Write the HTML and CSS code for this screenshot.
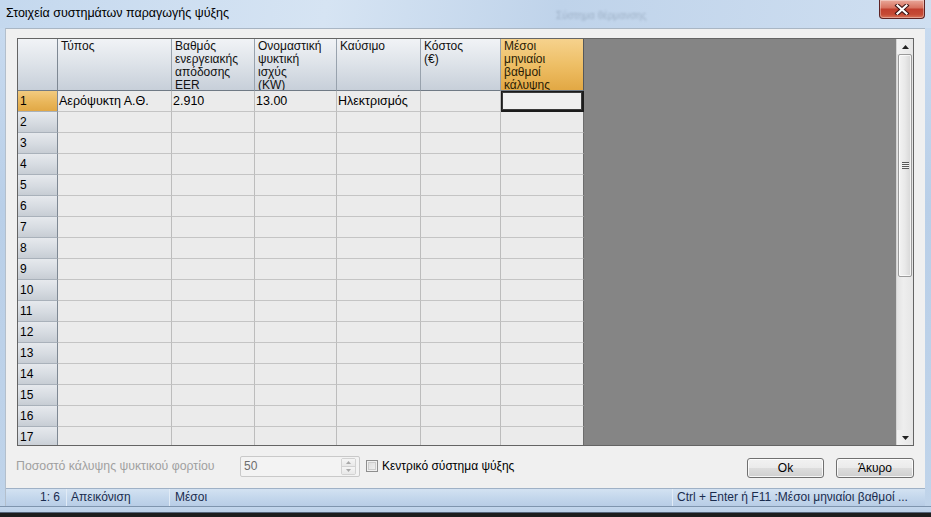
FILE: index.html
```html
<!DOCTYPE html>
<html lang="el">
<head>
<meta charset="utf-8">
<title>Στοιχεία συστημάτων παραγωγής ψύξης</title>
<link rel="stylesheet" href="styles.css">
</head>
<body>
<div class="window">
  <div class="titlebar">
    <span class="title">Στοιχεία συστημάτων παραγωγής ψύξης</span>
    <span class="ghost">Σύστημα θέρμανσης</span>
    <button class="close" aria-label="Κλείσιμο">
      <svg width="16" height="11" viewBox="0 0 16 11"><path d="M3.5 1.5 L12.5 9.5 M12.5 1.5 L3.5 9.5" stroke="#3b1313" stroke-width="4.2" stroke-linecap="square" fill="none"/><path d="M3.5 1.5 L12.5 9.5 M12.5 1.5 L3.5 9.5" stroke="#ffffff" stroke-width="2.2" stroke-linecap="square" fill="none"/></svg>
    </button>
  </div>
  <div class="client">
    <div class="gridbox">
      <div class="sheet">
        <div class="hc corner"></div>
        <div class="hc">Τύπος</div>
        <div class="hc">Βαθμός<br>ενεργειακής<br>απόδοσης<br>EER</div>
        <div class="hc">Ονομαστική<br>ψυκτική<br>ισχύς<br>(KW)</div>
        <div class="hc">Καύσιμο</div>
        <div class="hc">Κόστος<br>(€)</div>
        <div class="hc active">Μέσοι<br>μηνιαίοι<br>βαθμοί<br>κάλυψης</div>

        <div class="rh active">1</div><div class="c">Αερόψυκτη Α.Θ.</div><div class="c">2.910</div><div class="c">13.00</div><div class="c">Ηλεκτρισμός</div><div class="c"></div><div class="c sel"></div>
        <div class="rh">2</div><div class="c"></div><div class="c"></div><div class="c"></div><div class="c"></div><div class="c"></div><div class="c"></div>
        <div class="rh">3</div><div class="c"></div><div class="c"></div><div class="c"></div><div class="c"></div><div class="c"></div><div class="c"></div>
        <div class="rh">4</div><div class="c"></div><div class="c"></div><div class="c"></div><div class="c"></div><div class="c"></div><div class="c"></div>
        <div class="rh">5</div><div class="c"></div><div class="c"></div><div class="c"></div><div class="c"></div><div class="c"></div><div class="c"></div>
        <div class="rh">6</div><div class="c"></div><div class="c"></div><div class="c"></div><div class="c"></div><div class="c"></div><div class="c"></div>
        <div class="rh">7</div><div class="c"></div><div class="c"></div><div class="c"></div><div class="c"></div><div class="c"></div><div class="c"></div>
        <div class="rh">8</div><div class="c"></div><div class="c"></div><div class="c"></div><div class="c"></div><div class="c"></div><div class="c"></div>
        <div class="rh">9</div><div class="c"></div><div class="c"></div><div class="c"></div><div class="c"></div><div class="c"></div><div class="c"></div>
        <div class="rh">10</div><div class="c"></div><div class="c"></div><div class="c"></div><div class="c"></div><div class="c"></div><div class="c"></div>
        <div class="rh">11</div><div class="c"></div><div class="c"></div><div class="c"></div><div class="c"></div><div class="c"></div><div class="c"></div>
        <div class="rh">12</div><div class="c"></div><div class="c"></div><div class="c"></div><div class="c"></div><div class="c"></div><div class="c"></div>
        <div class="rh">13</div><div class="c"></div><div class="c"></div><div class="c"></div><div class="c"></div><div class="c"></div><div class="c"></div>
        <div class="rh">14</div><div class="c"></div><div class="c"></div><div class="c"></div><div class="c"></div><div class="c"></div><div class="c"></div>
        <div class="rh">15</div><div class="c"></div><div class="c"></div><div class="c"></div><div class="c"></div><div class="c"></div><div class="c"></div>
        <div class="rh">16</div><div class="c"></div><div class="c"></div><div class="c"></div><div class="c"></div><div class="c"></div><div class="c"></div>
        <div class="rh">17</div><div class="c"></div><div class="c"></div><div class="c"></div><div class="c"></div><div class="c"></div><div class="c"></div>
      </div>
      <div class="empty"></div>
      <div class="vscroll">
        <div class="sbtn"><svg width="7" height="4" viewBox="0 0 7 4"><path d="M0 4 L3.5 0 L7 4 Z" fill="#222"/></svg></div>
        <div class="track">
          <div class="thumb"><span class="grip"></span></div>
        </div>
        <div class="sbtn"><svg width="7" height="4" viewBox="0 0 7 4"><path d="M0 0 L7 0 L3.5 4 Z" fill="#222"/></svg></div>
      </div>
    </div>

    <div class="controls">
      <span class="dlabel">Ποσοστό κάλυψης ψυκτικού φορτίου</span>
      <div class="spin">
        <span class="spin-val">50</span>
        <div class="spin-btns">
          <span class="sb"><svg width="5" height="3" viewBox="0 0 5 3"><path d="M0 3 L2.5 0 L5 3 Z" fill="#a8a8a8"/></svg></span>
          <span class="sb"><svg width="5" height="3" viewBox="0 0 5 3"><path d="M0 0 L5 0 L2.5 3 Z" fill="#a8a8a8"/></svg></span>
        </div>
      </div>
      <span class="check"></span>
      <span class="clabel">Κεντρικό σύστημα ψύξης</span>
      <button class="btn ok">Ok</button>
      <button class="btn">Άκυρο</button>
    </div>

    <div class="statusbar">
      <span class="seg s1">1: 6</span>
      <span class="seg s2">Απεικόνιση</span>
      <span class="seg s3">Μέσοι</span>
      <span class="seg s4">Ctrl + Enter ή F11 :Μέσοι μηνιαίοι βαθμοί ...</span>
    </div>
  </div>
  <div class="frame-bottom"></div>
</div>
</body>
</html>
```

FILE: styles.css
```css
* { box-sizing: border-box; }
html, body { margin: 0; padding: 0; }
body {
  width: 931px;
  height: 517px;
  overflow: hidden;
  font-family: "Liberation Sans", Arial, sans-serif;
  font-size: 12px;
  background: #2a2a2a;
}
.window {
  width: 931px;
  height: 517px;
  display: flex;
  flex-direction: column;
  background: linear-gradient(180deg, #cadcf0 0%, #b9cfe8 40%, #c0d4ea 100%);
}
.titlebar {
  position: relative;
  height: 28px;
  flex: none;
  display: flex;
  align-items: flex-start;
  justify-content: space-between;
  padding: 0 6px 0 6px;
  background: linear-gradient(100deg, #c4d8ee 0%, #d6e4f3 35%, #bfd3ea 60%, #cfdff1 100%);
}
.title {
  margin-top: 5px;
  font-size: 12.5px;
  line-height: 16px;
  color: #000;
}
.ghost {
  position: absolute;
  left: 556px;
  top: 10px;
  font-size: 10px;
  color: #5b6d82;
  opacity: 0.35;
  filter: blur(0.8px);
}
.close {
  width: 46px;
  height: 19px;
  margin: 0;
  padding: 0;
  border: 1px solid #5e2323;
  border-top: 0;
  border-radius: 0 0 4px 4px;
  background: linear-gradient(180deg, #e9a89a 0%, #d87462 42%, #c1402f 52%, #c54a35 80%, #d8745a 100%);
  display: flex;
  align-items: center;
  justify-content: center;
  box-shadow: inset 0 0 0 1px rgba(255,255,255,0.35);
}
.close svg { display: block; }

.client {
  flex: 1;
  margin: 0 6px 0 5px;
  background: #f0f0f0;
  border-top: 1px solid #a9b6c4;
  border-left: 1px solid #b3bfcc;
  display: flex;
  flex-direction: column;
  padding-top: 9px;
}

/* grid */
.gridbox {
  margin: 0 11px 0 11px;
  height: 408px;
  flex: none;
  display: flex;
  border: 1px solid #646464;
  background: #858585;
  overflow: hidden;
}
.sheet {
  width: 566px;
  flex: none;
  display: grid;
  grid-template-columns: 40px 114px 83px 82px 84px 80px 83px;
  grid-auto-rows: 21px;
  grid-template-rows: 52px;
  align-content: start;
  overflow: hidden;
  background: #858585;
}
.hc {
  height: 52px;
  overflow: hidden;
  padding: 1px 1px 0 3px;
  font-size: 12px;
  line-height: 13px;
  color: #111;
  background: linear-gradient(180deg, #f1f3f6 0%, #dfe4ea 45%, #c7cfd9 100%);
  border-right: 1px solid #98a2ad;
  border-bottom: 1px solid #707a85;
}
.hc.corner { border-right-color: #7e8893; }
.hc.active {
  background: linear-gradient(180deg, #f6d28d 0%, #eebf66 50%, #e2a844 100%);
  border-right-color: #55585c;
  color: #2a1c05;
}
.rh {
  padding-left: 2px;
  font-size: 12px;
  line-height: 20px;
  color: #000;
  background: linear-gradient(180deg, #e6e9ed 0%, #d6dbe1 55%, #c7cdd4 100%);
  border-right: 1px solid #7e8893;
  border-bottom: 1px solid #a9b1ba;
}
.rh.active {
  background: linear-gradient(180deg, #f2cb80 0%, #e9b65a 55%, #e1a845 100%);
}
.c {
  padding-left: 1px;
  font-size: 12.5px;
  line-height: 20px;
  white-space: nowrap;
  overflow: hidden;
  color: #000;
  background: #ebebeb;
  border-right: 1px solid #bcbcbc;
  border-bottom: 1px solid #c4c4c4;
}
.c:nth-child(7n) { border-right-color: #6c6c6c; }
.c.sel {
  background: #f0f0f0;
  box-shadow: inset 0 0 0 1px #1c1c1c, inset 0 0 0 2px #3a3a3a;
  border-right-color: #1c1c1c;
  border-bottom-color: #1c1c1c;
}
.empty {
  flex: 1;
  background: #858585;
}
.vscroll {
  width: 17px;
  flex: none;
  display: flex;
  flex-direction: column;
  background: #e8e8e8;
  border-left: 1px solid #d4d4d4;
}
.sbtn {
  height: 15px;
  flex: none;
  display: flex;
  align-items: center;
  justify-content: center;
  background: linear-gradient(90deg, #f2f2f2, #e6e6e6);
}
.sbtn svg { display: block; }
.track {
  flex: 1;
  padding: 0 1px;
  background: linear-gradient(90deg, #e3e3e3, #eeeeee 40%, #e6e6e6);
}
.thumb {
  height: 223px;
  border: 1px solid #9a9a9a;
  border-radius: 2px;
  background: linear-gradient(90deg, #f3f3f3 0%, #e9e9e9 50%, #d6d6d6 100%);
  display: flex;
  align-items: center;
  justify-content: center;
  box-shadow: inset 0 0 0 1px rgba(255,255,255,0.7);
}
.grip {
  width: 7px;
  height: 7px;
  background: repeating-linear-gradient(180deg, #5a5a5a 0 1px, #f4f4f4 1px 2px);
}

/* controls */
.controls {
  height: 22px;
  flex: none;
  margin-top: 9px;
  display: flex;
  align-items: center;
  padding: 0 11px 0 10px;
}
.dlabel {
  color: #a0a0a0;
  font-size: 12.3px;
  width: 224px;
  flex: none;
}
.spin {
  width: 120px;
  height: 21px;
  flex: none;
  display: flex;
  align-items: center;
  border: 1px solid #c9c9c9;
  border-radius: 2px;
  background: #f3f3f3;
  padding: 1px 3px 1px 3px;
}
.spin-val {
  flex: 1;
  color: #6d6d6d;
  font-size: 12px;
}
.spin-btns {
  width: 15px;
  height: 17px;
  display: flex;
  flex-direction: column;
  border: 1px solid #d2d2d2;
  border-radius: 2px;
}
.sb {
  flex: 1;
  display: flex;
  align-items: center;
  justify-content: center;
  background: linear-gradient(#f5f5f5, #e8e8e8);
}
.sb + .sb { border-top: 1px solid #d2d2d2; }
.sb svg { display: block; }
.check {
  width: 12px;
  height: 12px;
  flex: none;
  margin-left: 6px;
  border: 1px solid #8e8e8e;
  background: linear-gradient(135deg, #d9d9d9, #f5f5f5);
  box-shadow: inset 0 0 0 1px #f0f0f0, inset 0 0 0 2px #cdcdcd;
}
.clabel {
  margin-left: 4px;
  color: #000;
  font-size: 12px;
}
.btn {
  height: 20px;
  width: 77px;
  margin: 3px 0 0 0;
  padding: 0;
  font-family: "Liberation Sans", Arial, sans-serif;
  font-size: 12px;
  color: #000;
  border: 1px solid #707070;
  border-radius: 3px;
  background: linear-gradient(180deg, #f2f2f2 0%, #ebebeb 48%, #dddddd 52%, #cfcfcf 100%);
  box-shadow: inset 0 0 0 1px rgba(255,255,255,0.8);
}
.btn.ok { margin-left: auto; }
.btn + .btn { margin-left: 12px; width: 78px; }

/* status bar */
.statusbar {
  margin-top: 11px;
  height: 18px;
  flex: none;
  display: flex;
  align-items: stretch;
  background: linear-gradient(180deg, #d3e2f2 0%, #c4d7ec 50%, #b8cde6 100%);
  border-top: 1px solid #9fb1c6;
  color: #1a2c4e;
  font-size: 12px;
  line-height: 16px;
}
.seg {
  border-left: 1px solid #e1ebf6;
  white-space: nowrap;
}
.s1 { width: 60px; text-align: right; padding-right: 6px; border-left: 0; }
.s2 { width: 103px; padding-left: 4px; }
.s3 { flex: 1; padding-left: 5px; }
.s4 { width: 253px; padding-left: 4px; }

.frame-bottom {
  height: 11px;
  flex: none;
  background: linear-gradient(180deg, #7f95ae 0px, #7f95ae 1px, #c3d6ec 1px, #bcd1e8 6px, #56657a 6px, #56657a 7px, #1e1e1e 7px);
}
```
